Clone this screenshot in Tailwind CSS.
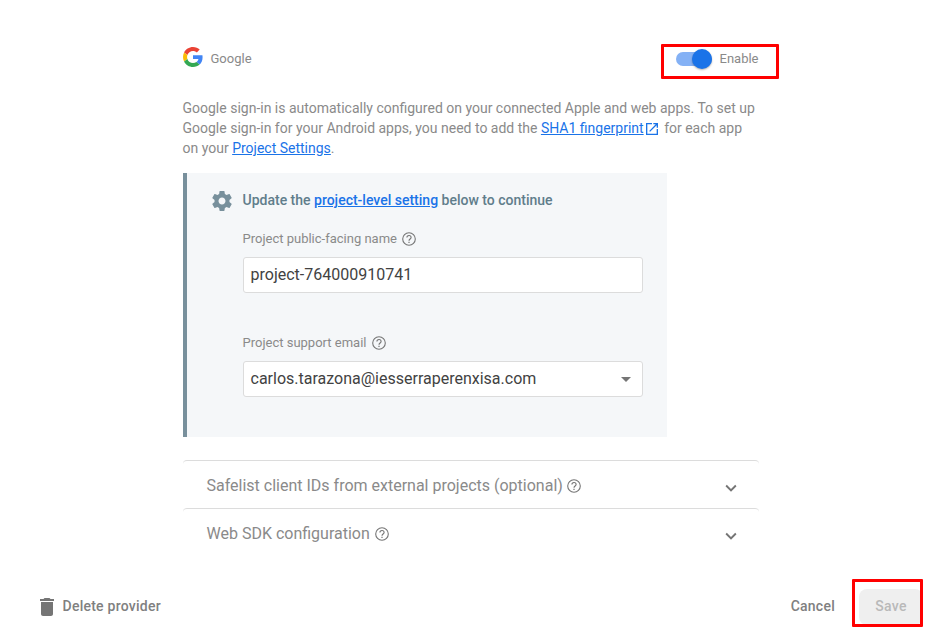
<!DOCTYPE html>
<html lang="en">
<head>
<meta charset="utf-8">
<title>Google sign-in provider</title>
<script src="https://cdn.jsdelivr.net/npm/@tailwindcss/browser@4"></script>
</head>
<body class="bg-white font-['Roboto',sans-serif] text-[#8a8a8a]">
<svg class="hidden">
  <symbol id="help" viewBox="0 0 16 16"><circle cx="8" cy="8" r="6.300" fill="none" stroke="#757575" stroke-width="1.100"/><path d="M5.900 6.600C5.900 5.400 6.800 4.500 8 4.500s2.100.9 2.100 2c0 1.400-2.100 1.700-2.100 3.300" fill="none" stroke="#757575" stroke-width="1.100"/><path d="M7.400 10.700h1.200v1.200H7.400z" fill="#757575"/></symbol>
  <symbol id="expand" viewBox="0 0 24 24"><path d="M16.590 8.590L12 13.170 7.410 8.590 6 10l6 6 6-6z"/></symbol>
</svg>
<div class="relative flex h-[638px] w-[931px] flex-col overflow-hidden">
  <main class="ml-[183px] w-[575px] pt-[44px]">
    <header class="flex h-[30px] items-center justify-between text-[13px] leading-5">
      <div class="flex items-center">
        <svg class="mb-1 h-5 w-5" viewBox="0 0 48 48"><path fill="#EA4335" d="M24 9.500c3.540 0 6.710 1.220 9.210 3.600l6.850-6.850C35.900 2.380 30.470 0 24 0 14.620 0 6.510 5.380 2.560 13.220l7.980 6.190C12.430 13.720 17.740 9.500 24 9.500z"/><path fill="#4285F4" d="M46.980 24.550c0-1.570-.150-3.090-.380-4.550H24v9.020h12.940c-.580 2.960-2.260 5.480-4.780 7.180l7.730 6c4.510-4.180 7.090-10.360 7.090-17.650z"/><path fill="#FBBC05" d="M10.530 28.590c-.480-1.450-.760-2.990-.760-4.590s.270-3.140.760-4.590l-7.980-6.190C.920 16.460 0 20.120 0 24c0 3.880.920 7.540 2.560 10.780l7.970-6.190z"/><path fill="#34A853" d="M24 48c6.480 0 11.930-2.130 15.890-5.810l-7.730-6c-2.150 1.450-4.920 2.300-8.160 2.300-6.260 0-11.570-4.220-13.470-9.910l-7.980 6.190C6.510 42.620 14.620 48 24 48z"/></svg>
        <span class="ml-[7.500px]">Google</span>
      </div>
      <div class="flex items-center">
        <div class="mr-[7.500px] -ml-px flex h-[14px] w-9 items-center justify-end rounded-full bg-[#84b1f5]"><div class="h-5 w-5 shrink-0 rounded-full bg-[#1a73e8] shadow-[0_1px_2px_rgba(0,0,0,0.3)]"></div></div>
        <span class="-mr-[0.5px]">Enable</span>
      </div>
    </header>
    <p class="mt-6 -ml-[0.5px] text-sm leading-5 whitespace-nowrap">
      <span class="block">Google sign-in is automatically configured on your connected Apple and web apps. To set up</span>
      <span class="block">Google sign-in for your Android apps, you need to add the <a class="text-[#1a73e8] underline">SHA1 fingerprint</a><svg class="mr-[0.5px] ml-[0.5px] inline h-4 w-4 align-[-4px]" viewBox="0 0 24 24" fill="#1a73e8"><path d="M19 19H5V5h7V3H3v18h18v-9h-2v7zM14 3v2h3.590l-9.830 9.830 1.410 1.410L19 6.410V10h2V3h-7z"/></svg> for each app</span>
      <span class="block">on your <a class="text-[#1a73e8] underline">Project Settings</a>.</span>
    </p>
    <section class="mt-[15px] flex h-[264px] w-[484px] border-l-4 border-[#78909c] bg-[#f5f7f9] pt-4 pl-[23px]">
      <svg class="h-6 w-6 shrink-0" viewBox="0 0 24 24" fill="#78909c"><path d="M19.430 12.980c.040-.320.070-.640.070-.980s-.030-.660-.070-.980l2.110-1.650c.190-.150.240-.420.120-.640l-2-3.460c-.120-.220-.390-.300-.610-.220l-2.490 1c-.520-.400-1.080-.730-1.690-.980l-.380-2.650C14.460 2.180 14.250 2 14 2h-4c-.250 0-.460.180-.490.420l-.380 2.650c-.610.250-1.170.590-1.690.980l-2.490-1c-.230-.090-.490 0-.610.220l-2 3.460c-.130.220-.070.490.120.640l2.110 1.650c-.040.320-.070.650-.070.980s.030.660.070.980l-2.110 1.650c-.190.150-.240.420-.120.640l2 3.460c.120.220.390.300.610.220l2.490-1c.520.400 1.080.730 1.690.980l.380 2.650c.030.240.240.420.490.420h4c.250 0 .460-.180.490-.420l.380-2.650c.610-.250 1.170-.590 1.690-.980l2.490 1c.230.090.490 0 .610-.220l2-3.460c.120-.220.070-.490-.120-.640l-2.110-1.650zM12 15.500c-1.930 0-3.500-1.570-3.500-3.500s1.570-3.500 3.500-3.500 3.500 1.570 3.500 3.500-1.570 3.500-3.500 3.500z"/></svg>
      <div class="ml-[9px] w-[400px]">
        <h2 class="-ml-[0.5px] pt-px text-sm leading-5 font-medium text-[#607d8b] whitespace-nowrap">Update the <a class="text-[#1a73e8] underline">project-level setting</a> below to continue</h2>
        <div class="mt-[19px] -ml-[0.5px] flex h-5 items-center text-[13px]"><span>Project public-facing name</span><svg class="ml-1 h-4 w-4"><use href="#help"/></svg></div>
        <div class="mt-2 flex h-9 items-center rounded-[3px] border border-[#dcdcdc] bg-white pl-[6.500px] text-base text-[#424242]">project-764000910741</div>
        <div class="mt-10 -ml-[0.5px] flex h-5 items-center text-[13px]"><span>Project support email</span><svg class="ml-[4.500px] h-4 w-4"><use href="#help"/></svg></div>
        <div class="mt-2 flex h-9 items-center justify-between rounded-[3px] border border-[#dcdcdc] bg-white pr-[11px] pl-[6.500px] text-base text-[#424242]"><span>carlos.tarazona@iesserraperenxisa.com</span><svg class="mt-px h-[5px] w-[10px] fill-[#757575]" viewBox="0 0 10 5"><path d="M0 0h10L5 5z"/></svg></div>
      </div>
    </section>
    <div class="mt-[23px] w-[576px]">
      <div class="flex h-12 items-center rounded-t-[4px] border-t border-[#dcdcdc] pt-[2px] pr-[17px] pl-[23.500px]"><span>Safelist client IDs from external projects (optional)</span><svg class="ml-[3.500px] h-4 w-4"><use href="#help"/></svg><svg class="mt-[5px] ml-auto h-[22px] w-[22px] fill-[#757575]"><use href="#expand"/></svg></div>
      <div class="flex h-12 items-center rounded-t-[4px] border-t border-[#dcdcdc] pt-[2px] pr-[17px] pl-[23.500px]"><span>Web SDK configuration</span><svg class="ml-1 h-4 w-4"><use href="#help"/></svg><svg class="mt-[5px] ml-auto h-[22px] w-[22px] fill-[#757575]"><use href="#expand"/></svg></div>
    </div>
  </main>
  <footer class="mt-8 flex h-9 items-center pr-[8px] pl-[34.500px] text-sm font-medium tracking-[0.25px] text-[#808080]">
    <svg class="mt-px h-6 w-6 fill-[#757575]" viewBox="0 0 24 24"><path d="M6 19c0 1.100.900 2 2 2h8c1.100 0 2-.900 2-2V7H6v12zM19 4h-3.500l-1-1h-5l-1 1H5v2h14V4z"/></svg>
    <span class="ml-1">Delete provider</span>
    <span class="ml-auto">Cancel</span>
    <button class="mt-px -mb-px ml-6 h-9 w-[64px] rounded-lg bg-[#efefef] pb-[2px] text-[#b9b9b9]">Save</button>
  </footer>
  <div class="absolute top-[44px] left-[661px] h-[35px] w-[118px] rounded-[1px] border-3 border-[#ff0000]"></div>
  <div class="absolute top-[579px] left-[852px] h-[48px] w-[71px] rounded-[1px] border-3 border-[#ff0000]"></div>
</div>
</body>
</html>
